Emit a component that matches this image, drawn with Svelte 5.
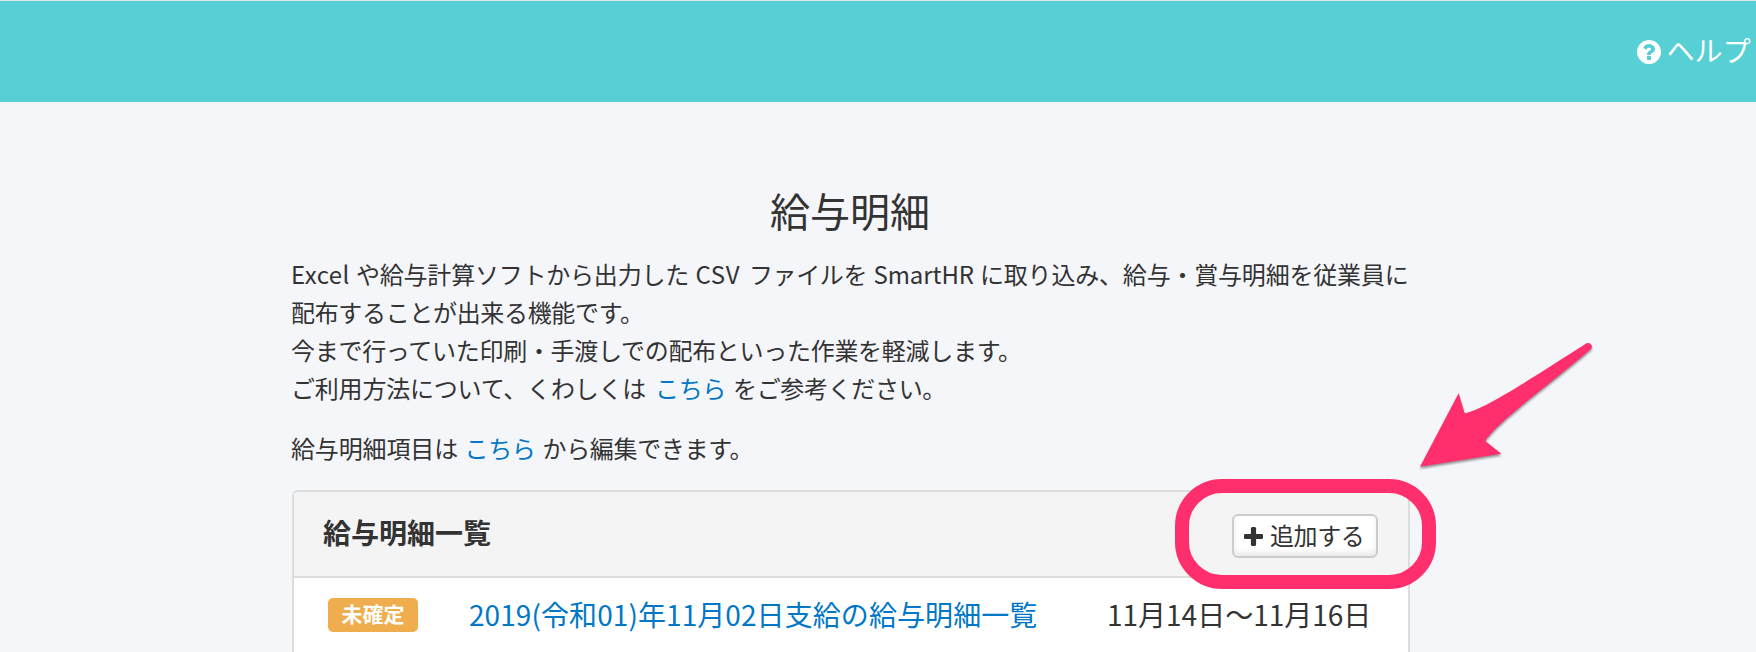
<script>
  const size = 24;
  const intro = [
    [
      { t: 'Excel', w: 65, latin: 0.45 },
      { t: 'や給与計算ソフトから出力した', w: 333 },
      { t: 'CSV', w: 60, latin: 0.7, pad: 6.5 },
      { t: 'ファイルを', w: 118 },
      { t: 'SmartHR', w: 113, latin: -0.1, pad: 6.5 },
      { t: 'に取り込み、給与・賞与明細を従業員に', w: 428.5 }
    ],
    [{ t: '配布することが出来る機能です。', w: 355 }],
    [{ t: '今まで行っていた印刷・手渡しでの配布といった作業を軽減します。', w: 735 }],
    [
      { t: 'ご利用方法について、くわしくは', w: 364, n: 357 },
      { t: 'こちら', w: 78, n: 71, link: true },
      { t: 'をご参考ください。', w: 213 }
    ]
  ];
  const edit = [
    [
      { t: '給与明細項目は', w: 173.5, n: 167 },
      { t: 'こちら', w: 78, n: 71, link: true },
      { t: 'から編集できます。', w: 213 }
    ]
  ];
  const spacing = (s) => s.latin ?? (s.n ?? s.w) / s.t.length - size;
  const box = (s) => `width:${s.w}px;letter-spacing:${spacing(s)}px;text-indent:${s.pad ?? 0}px`;
</script>

{#snippet lines(rows)}
  {#each rows as row}
    <span class="line">
      {#each row as s}
        {#if s.link}
          <a href="#guide" style={box(s)}>{s.t}</a>
        {:else}
          <span style={box(s)}>{s.t}</span>
        {/if}
      {/each}
    </span>
  {/each}
{/snippet}

<div class="page">
  <header>
    <a class="help" href="#help">
      <svg width="24" height="24" viewBox="0 0 1536 1536" aria-hidden="true">
        <path fill="#fff" d="M896 1248v-192q0-14-9-23t-23-9H672q-14 0-23 9t-9 23v192q0 14 9 23t23 9h192q14 0 23-9t9-23zm256-672q0-88-55.500-163T958 297t-170-41q-243 0-371 213-15 24 8 42l132 100q7 6 19 6 16 0 25-12 53-68 86-92 34-24 86-24 48 0 85.500 26t37.500 59q0 38-20 61t-68 45q-63 28-115.500 86.500T640 892v36q0 14 9 23t23 9h192q14 0 23-9t9-23q0-19 21.500-49.500T972 829q32-18 49-28.500t46-35 44.500-48 28-60.500 12.500-81zm384 192q0 209-103 385.500T1153.500 1433 768 1536t-385.500-103T103 1153.500 0 768t103-385.500T382.500 103 768 0t385.500 103T1433 382.500 1536 768z" />
      </svg>
      <span>ヘルプ</span>
    </a>
  </header>

  <main>
    <h1>給与明細</h1>
    <p>{@render lines(intro)}</p>
    <p>{@render lines(edit)}</p>

    <section>
      <div class="head">
        <h2>給与明細一覧</h2>
        <button>
          <svg width="19" height="19" viewBox="0 0 1408 1408" aria-hidden="true">
            <path fill="#333" d="M1408 608v192q0 40-28 68t-68 28H896v416q0 40-28 68t-68 28H608q-40 0-68-28t-28-68V896H96q-40 0-68-28T0 800V608q0-40 28-68t68-28h416V96q0-40 28-68t68-28h192q40 0 68 28t28 68v416h416q40 0 68 28t28 68z" />
          </svg>
          <span>追加する</span>
        </button>
      </div>
      <div class="row">
        <span class="badge">未確定</span>
        <a class="name" href="#list">2019(令和01)年11月02日支給の給与明細一覧</a>
        <span class="date">11月14日〜11月16日</span>
      </div>
    </section>
  </main>

  <div class="ring"></div>
  <svg class="arrow" width="210" height="150" viewBox="0 0 630 450" aria-hidden="true">
    <path fill="#ff2f6e" d="M60 410L176 190L194 250C250 240 390 148 560 40C571 35 581 49 573 57C470 146 292 276 256 333L304 371Z" />
  </svg>
</div>

<style>
  :global(body) {
    margin: 0;
  }
  .page {
    position: relative;
    box-sizing: border-box;
    height: 652px;
    overflow: hidden;
    background: #f5f6fa;
    color: #333;
    font-family: 'Noto Sans CJK JP', sans-serif;
    font-size: 24px;
  }
  a {
    color: #0077c7;
    text-decoration: none;
  }
  header {
    box-sizing: border-box;
    height: 102px;
    padding-right: 5px;
    border-top: 1px solid #e3e5e6;
    background: #57d0d5;
    display: flex;
    align-items: center;
    justify-content: flex-end;
  }
  .help {
    display: flex;
    align-items: center;
    gap: 5px;
    color: #fff;
    font-size: 28px;
    line-height: 40px;
  }
  .help span {
    margin-top: -3px;
    letter-spacing: 0.2px;
  }
  main {
    width: 1118px;
    margin-left: 292px;
    padding-top: 80px;
  }
  h1 {
    margin: 0 0 18px -2px;
    height: 56px;
    line-height: 56px;
    font-size: 40px;
    font-weight: 400;
    text-align: center;
  }
  p {
    margin: 0 0 22px -1px;
    line-height: 36px;
  }
  .line {
    display: flex;
    height: 38px;
    white-space: nowrap;
  }
  .line > * {
    flex: none;
  }
  section {
    box-sizing: border-box;
    height: 200px;
    border: 2px solid #dcdddd;
    border-radius: 6px;
    background: #fff;
    overflow: hidden;
  }
  .head {
    box-sizing: border-box;
    height: 86px;
    padding: 0 30px 0 29px;
    border-bottom: 2px solid #dcdddd;
    background: #f4f4f4;
    display: flex;
    align-items: center;
    justify-content: space-between;
  }
  h2 {
    margin: -4px 0 0;
    font-size: 28px;
    line-height: 40px;
    font-weight: 700;
  }
  button {
    box-sizing: border-box;
    width: 146px;
    height: 44px;
    margin-top: 4px;
    padding: 0 0 0 10px;
    border: 2px solid #ccc;
    border-radius: 6px;
    background: #fff;
    box-shadow: inset 0 -4px 6px -1px #e6e6e6;
    color: #333;
    font: 24px/36px 'Noto Sans CJK JP', sans-serif;
    display: flex;
    align-items: center;
    gap: 7px;
  }
  button span {
    margin-top: -2px;
    letter-spacing: -0.4px;
    white-space: nowrap;
  }
  .row {
    height: 74px;
    padding-left: 34px;
    display: flex;
    align-items: center;
    font-size: 28px;
    line-height: 40px;
    white-space: nowrap;
  }
  .badge {
    flex: none;
    width: 90px;
    height: 34px;
    border-radius: 5px;
    background: #f0ad4e;
    color: #fff;
    font-size: 21px;
    font-weight: 700;
    line-height: 31px;
    text-align: center;
  }
  .name {
    flex: none;
    width: 638px;
    margin: -3px 0 0 51px;
    letter-spacing: 0.08px;
  }
  .date {
    margin-top: -3px;
  }
  .ring {
    position: absolute;
    box-sizing: border-box;
    left: 1175px;
    top: 479px;
    width: 261px;
    height: 110px;
    border: 14px solid #ff2f6e;
    border-radius: 47px;
  }
  .arrow {
    position: absolute;
    left: 1400px;
    top: 330px;
    filter: drop-shadow(0 2px 1px rgba(0, 0, 0, 0.4));
  }
</style>
